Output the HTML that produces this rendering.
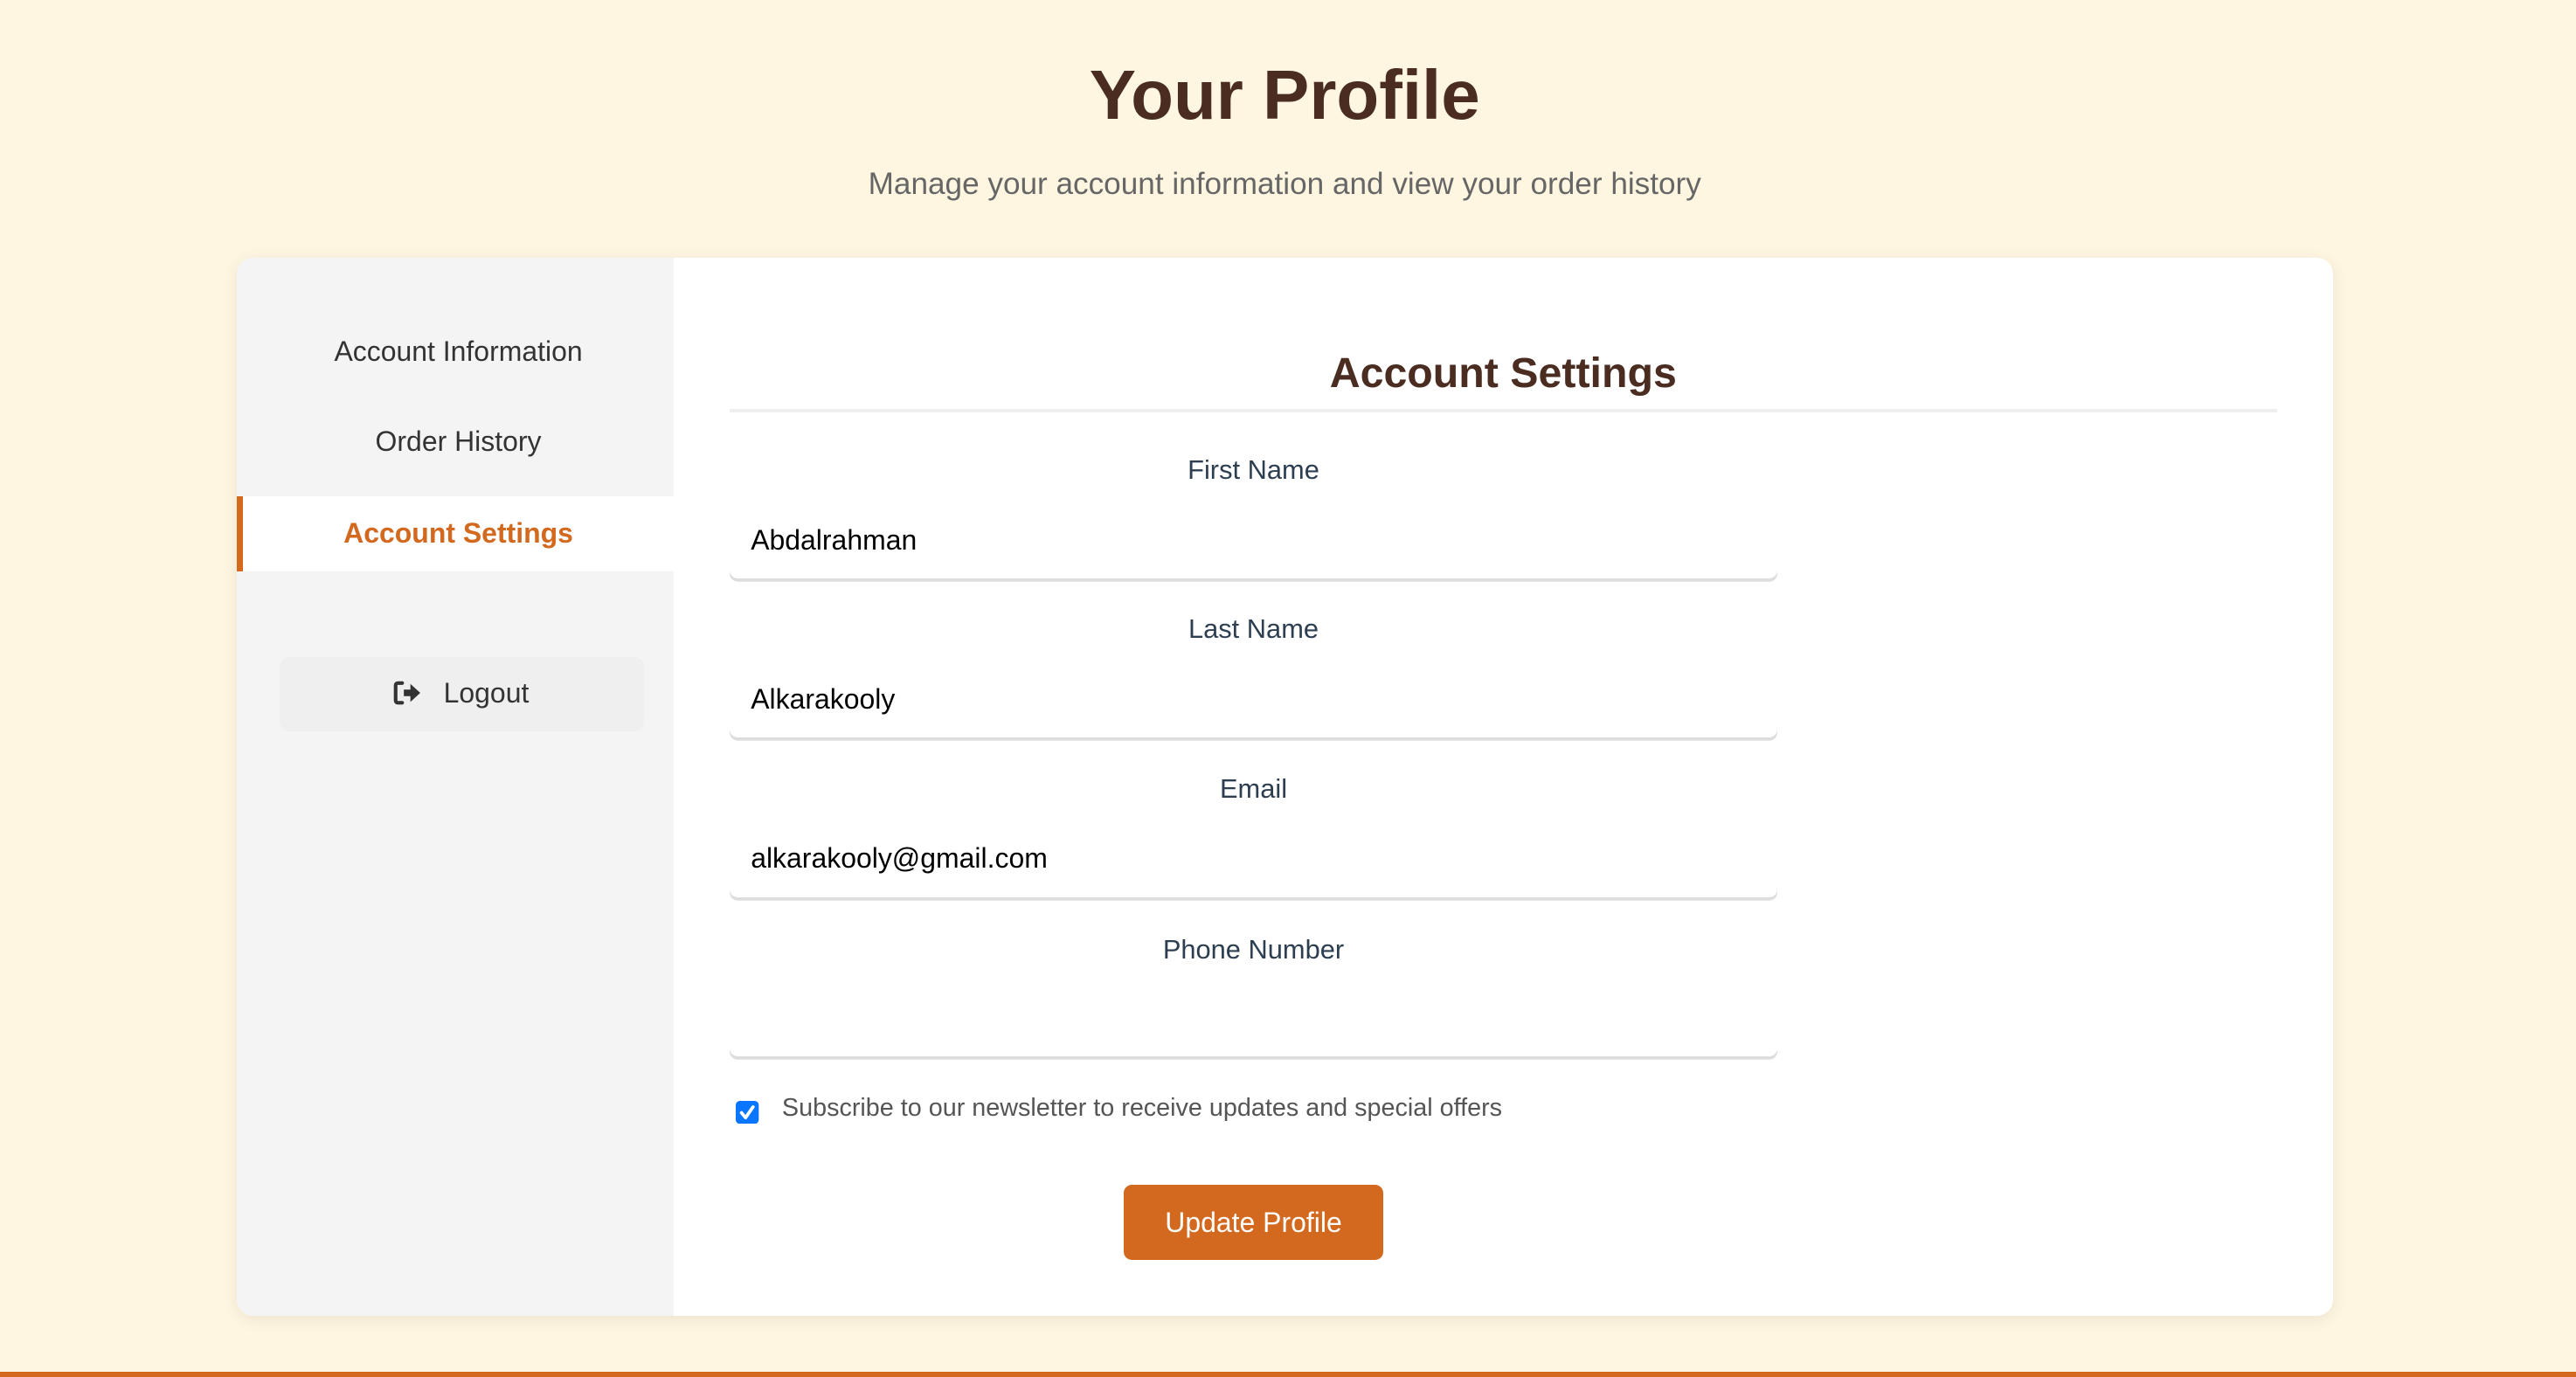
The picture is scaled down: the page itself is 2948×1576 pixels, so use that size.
<!DOCTYPE html>
<html><head><meta charset="utf-8">
<style>
html,body{margin:0;padding:0;}
body{width:1568px;height:838px;zoom:1.88010;background:#fef6e0;font-family:"Liberation Sans",Arial,sans-serif;position:relative;overflow:hidden;}
.a{position:absolute;}
h1{position:absolute;left:0;width:1564px;top:30px;margin:0;text-align:center;font-size:42.5px;font-weight:bold;color:#4a2c20;line-height:56px;}
.sub{left:0;width:1564px;top:101px;text-align:center;font-size:18.7px;color:#666;line-height:22px;}
.card{left:144px;top:157px;width:1276px;height:644px;background:#fff;border-radius:10px;box-shadow:0 2px 10px rgba(0,0,0,0.08);overflow:hidden;}
.side{left:0;top:0;width:266px;height:644px;background:#f4f4f4;}
.nav{left:0;width:270px;text-align:center;font-size:17px;color:#333;line-height:20px;}
.act{left:0;top:145px;width:266px;height:46px;background:#fff;}
.act .bar{left:0;top:0;width:4px;height:46px;background:#d2691e;}
.logout{left:26px;top:243px;width:222px;height:45px;background:#efefef;border-radius:6px;}
.lbl{left:300px;width:638px;text-align:center;font-size:16.4px;color:#2c3e50;line-height:20px;}
.inp{left:300px;width:638px;height:46px;border-radius:5px;box-shadow:0 2px 0 #ddd;background:#fff;}
.val{left:13px;top:13px;font-size:17px;color:#000;line-height:20px;}
</style></head><body>
<h1>Your Profile</h1>
<div class="a sub">Manage your account information and view your order history</div>
<div class="a card">
  <div class="a side">
    <div class="a nav" style="top:47px">Account Information</div>
    <div class="a nav" style="top:102px">Order History</div>
    <div class="a act"><div class="a bar"></div><div class="a nav" style="top:13px;color:#d2691e;font-weight:bold;">Account Settings</div></div>
    <div class="a logout">
      <svg class="a" style="left:69px;top:14px" width="19" height="16" viewBox="0 0 19 16"><path d="M6 2H3.5Q2 2 2 3.5v9Q2 14 3.5 14H6" fill="none" stroke="#333" stroke-width="2.2" stroke-linecap="round"/><path d="M7 6h4V2.5L17 8l-6 5.5V10H7z" fill="#333"/></svg>
      <div class="a" style="left:100px;top:12px;font-size:17px;color:#333;line-height:20px;">Logout</div>
    </div>
  </div>
  <div class="a" style="left:266px;width:1010px;top:55px;text-align:center;font-size:25.7px;font-weight:bold;color:#4a2c20;line-height:30px;">Account Settings</div>
  <div class="a" style="left:300px;top:92px;width:942px;height:2px;background:#eee;"></div>

  <div class="a lbl" style="top:119px">First Name</div>
  <div class="a inp" style="top:149px"><div class="a val">Abdalrahman</div></div>
  <div class="a lbl" style="top:216px">Last Name</div>
  <div class="a inp" style="top:246px"><div class="a val">Alkarakooly</div></div>
  <div class="a lbl" style="top:313px">Email</div>
  <div class="a inp" style="top:343px"><div class="a val">alkarakooly@gmail.com</div></div>
  <div class="a lbl" style="top:411px">Phone Number</div>
  <div class="a inp" style="top:440px"></div>

  <svg class="a" style="left:304px;top:513px" width="14" height="14" viewBox="0 0 14 14"><rect width="14" height="14" rx="2.5" fill="#0a75ff"/><path d="M3.5 7.2l2.5 3 4.5-6.5" fill="none" stroke="#fff" stroke-width="2" stroke-linecap="round" stroke-linejoin="round"/></svg>
  <div class="a" style="left:332px;top:509px;font-size:15.3px;color:#555;line-height:18px;">Subscribe to our newsletter to receive updates and special offers</div>

  <div class="a" style="left:540px;top:564px;width:158px;height:46px;background:#d2691e;border-radius:5px;color:#fff;font-size:17px;text-align:center;line-height:46px;">Update Profile</div>
</div>
<div class="a" style="left:0;top:835px;width:1568px;height:3px;background:#d2691e;"></div>
</body></html>
